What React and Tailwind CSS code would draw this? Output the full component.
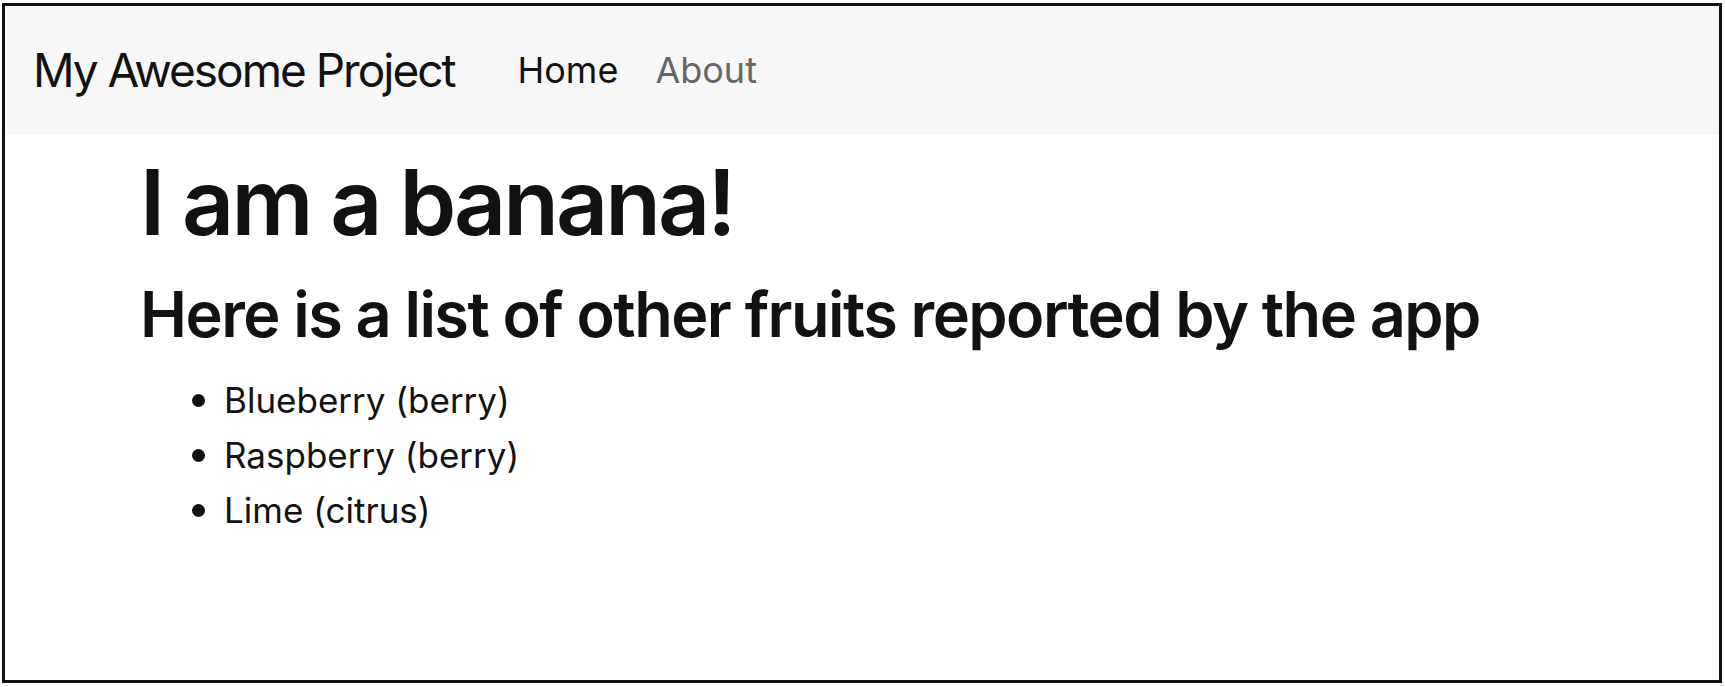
export default function App() {
  const items = ["Blueberry (berry)", "Raspberry (berry)", "Lime (citrus)"];
  return (
    <div className="w-[1725px] h-[687px] bg-white pt-[3px] pl-[2px] pr-[3px] pb-[4px]" style={{ fontFamily: 'Inter, "Noto Sans", sans-serif' }}>
      <div className="h-full border-[3px] border-[#111] flex flex-col text-[#121212]">
        <nav className="h-[129px] bg-[#f7f7f7] flex items-center pl-[28px]">
          <span className="text-[46px] leading-[1.2] tracking-[-2px]">My Awesome Project</span>
          <a className="text-[36px] leading-[1.2] ml-[63px] text-[#121212]">Home</a>
          <a className="text-[36px] leading-[1.2] ml-[37px] text-[#666]">About</a>
        </nav>
        <main className="pl-[135px]">
          <h1 className="text-[91px] leading-[1.2] font-semibold mt-[13px] tracking-[-3px]">I am a banana!</h1>
          <h2 className="text-[63px] leading-[1.2] font-semibold mt-[20px] tracking-[-1.55px]">Here is a list of other fruits reported by the app</h2>
          <ul className="pl-[52px] mt-[20px] text-[35px] leading-[55px]">
            {items.map((t) => (
              <li key={t} className="flex items-center">
                <span className="w-[13px] h-[13px] rounded-full bg-[#121212] mr-[19px]" />
                <span>{t}</span>
              </li>
            ))}
          </ul>
        </main>
      </div>
    </div>
  );
}
